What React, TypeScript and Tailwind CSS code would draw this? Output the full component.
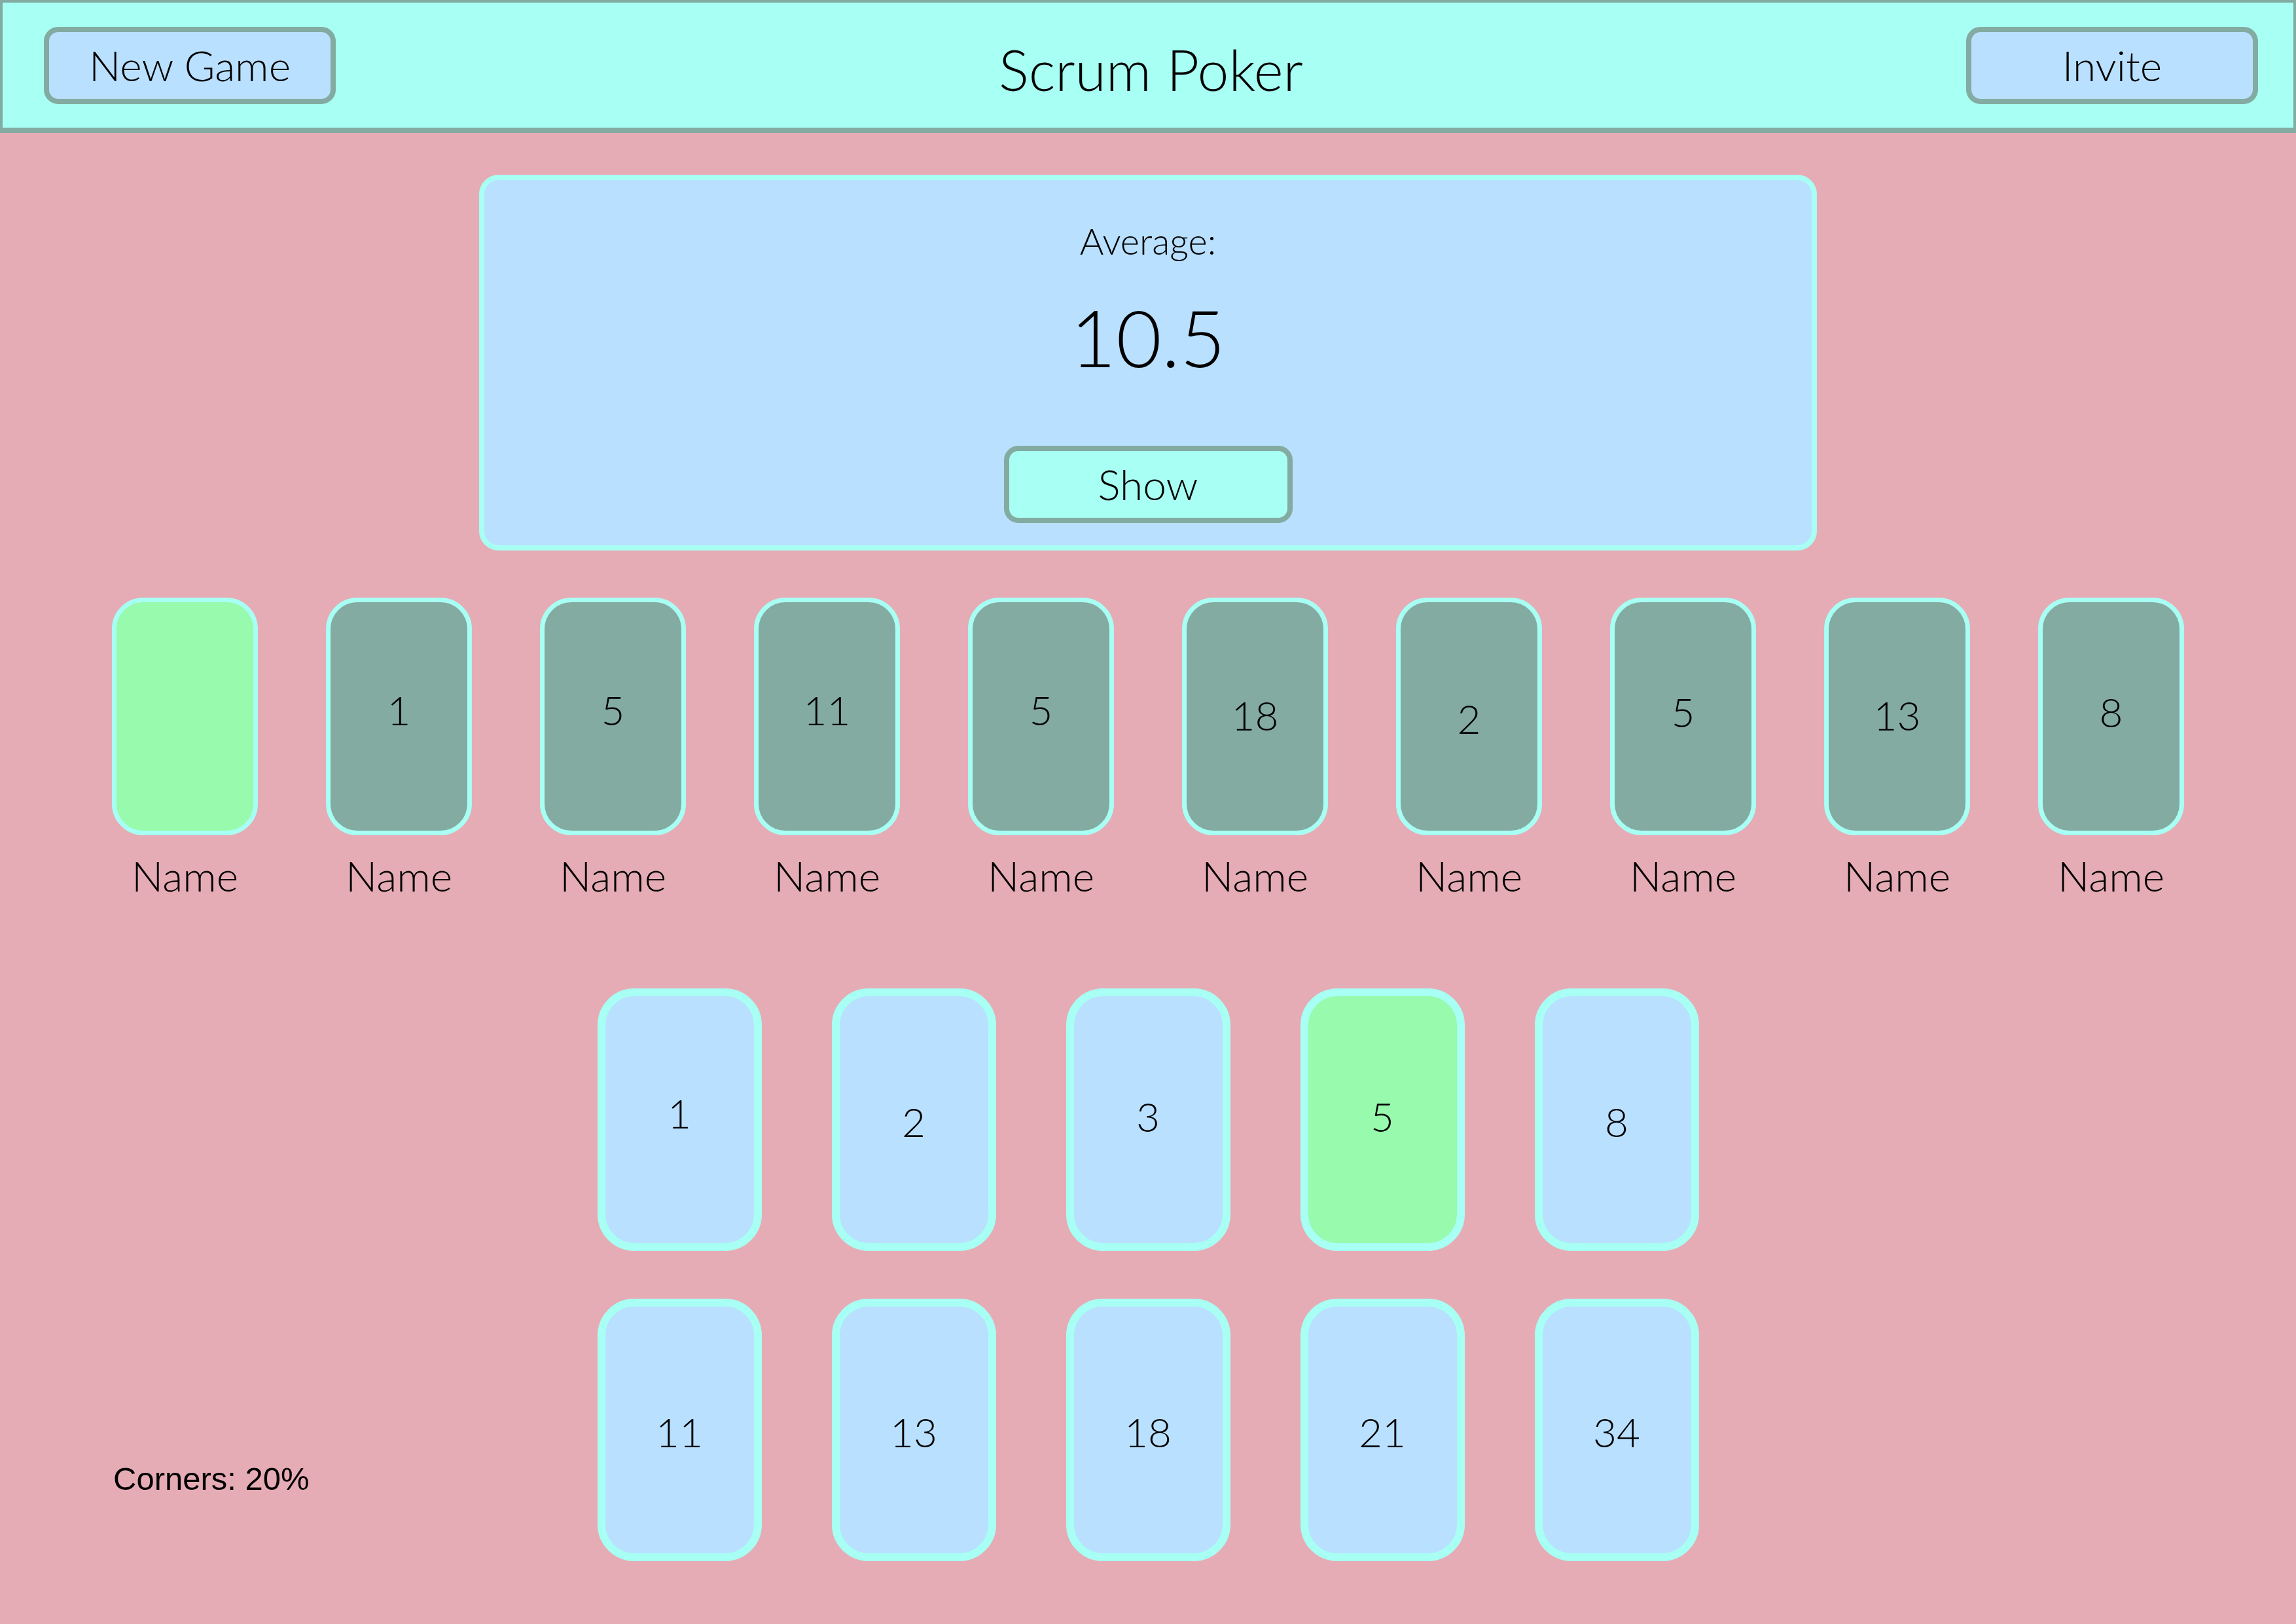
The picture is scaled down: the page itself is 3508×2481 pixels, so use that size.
import React from "react";

type Vote = { value: string; picked?: boolean; shift: string };

const players: Vote[] = [
  { value: "", picked: true, shift: "" },
  { value: "1", shift: "pb-[20px]" },
  { value: "5", shift: "pb-[20px]" },
  { value: "11", shift: "pb-[20px]" },
  { value: "5", shift: "pb-[20px]" },
  { value: "18", shift: "pb-[4px]" },
  { value: "2", shift: "pt-[6px]" },
  { value: "5", shift: "pb-[14px]" },
  { value: "13", shift: "pb-[4px]" },
  { value: "8", shift: "pb-[14px]" },
];

const choices: Vote[] = [
  { value: "1", shift: "pb-[21px]" },
  { value: "2", shift: "pt-[5px]" },
  { value: "3", shift: "pb-[10px]" },
  { value: "5", picked: true, shift: "pb-[10px]" },
  { value: "8", shift: "pt-[6px]" },
  { value: "11", shift: "pt-[6px]" },
  { value: "13", shift: "pt-[6px]" },
  { value: "18", shift: "pt-[6px]" },
  { value: "21", shift: "pt-[6px]" },
  { value: "34", shift: "pt-[6px]" },
];

function HeaderButton({ label }: { label: string }) {
  return (
    <button className="w-[446px] h-[118px] flex items-center justify-center rounded-[22px] border-8 border-[#83aba1] bg-[#b9e0fe] text-[64px] font-light text-black">
      {label}
    </button>
  );
}

function PlayerCard({ vote }: { vote: Vote }) {
  return (
    <div className="flex flex-col items-center w-[223px]">
      <div
        className={`w-[223px] h-[363px] rounded-[48px] border-[7px] border-[#a8fff3] flex items-center justify-center text-[62px] ${
          vote.picked ? "bg-[#97faad]" : "bg-[#83aba1]"
        } ${vote.shift}`}
      >
        {vote.value}
      </div>
      <div className="mt-[23px] text-[64px] leading-[77px]">Name</div>
    </div>
  );
}

function ChoiceCard({ vote }: { vote: Vote }) {
  return (
    <button
      className={`w-[251px] h-[401px] rounded-[56px] border-[12px] border-[#a8fff3] flex items-center justify-center text-[62px] font-light ${
        vote.picked ? "bg-[#97faad]" : "bg-[#b9e0fe]"
      } ${vote.shift}`}
    >
      {vote.value}
    </button>
  );
}

export default function App() {
  return (
    <div className="w-[3508px] h-[2481px] bg-[#e6acb5] flex flex-col font-['Lato',sans-serif] font-light text-black overflow-hidden">
      {/* top bar */}
      <header className="h-[203px] shrink-0 bg-[#a8fff3] border-x-4 border-t-4 border-b-8 border-[#83aba1] flex items-center justify-between pl-[63px] pr-[54px]">
        <HeaderButton label="New Game" />
        <h1 className="mt-[12px] text-[86px] leading-[103px]">Scrum Poker</h1>
        <HeaderButton label="Invite" />
      </header>

      {/* result panel */}
      <section className="mt-[64px] mx-auto w-[2044px] h-[574px] shrink-0 rounded-[30px] border-8 border-[#a8fff3] bg-[#b9e0fe] flex flex-col items-center pt-[59px]">
        <div className="text-[56px] leading-[67px]">Average:</div>
        <div className="mt-[42px] text-[120px] leading-[144px]">10.5</div>
        <button className="mt-[94px] w-[441px] h-[118px] rounded-[22px] border-8 border-[#83aba1] bg-[#a8fff3] flex items-center justify-center text-[64px] font-light">
          Show
        </button>
      </section>

      {/* table of players */}
      <section className="mt-[72px] flex justify-center gap-[104px]">
        {players.map((p, i) => (
          <PlayerCard key={i} vote={p} />
        ))}
      </section>

      {/* deck */}
      <section className="mt-[134px] grid grid-cols-[1fr_auto_1fr]">
        <div className="self-end pl-[173px] pb-[98px] font-['Liberation_Sans',Arial,sans-serif] font-normal text-[49px] leading-[55px]">
          Corners: 20%
        </div>
        <div className="grid grid-cols-5 gap-x-[107px] gap-y-[73px]">
          {choices.map((c, i) => (
            <ChoiceCard key={i} vote={c} />
          ))}
        </div>
        <div />
      </section>
    </div>
  );
}
